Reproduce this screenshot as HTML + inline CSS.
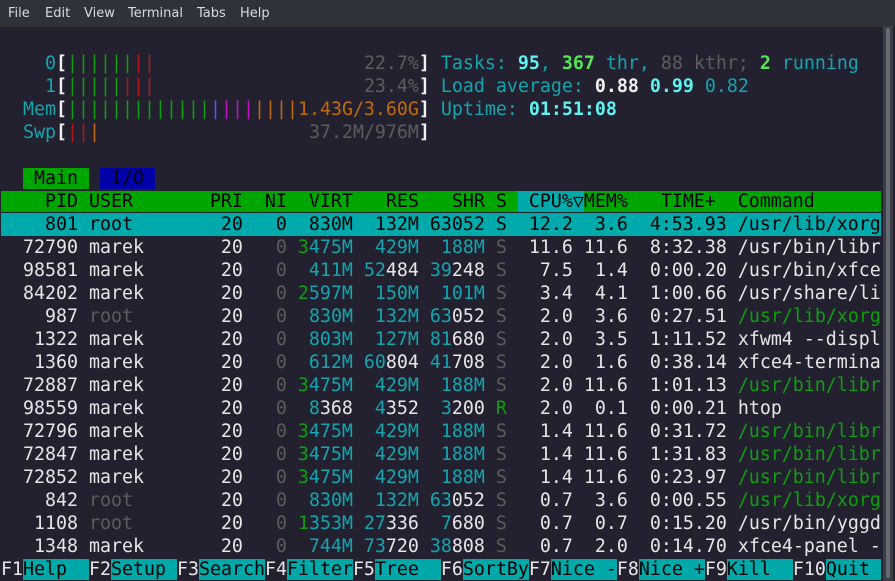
<!DOCTYPE html>
<html><head><meta charset="utf-8"><style>
html,body{margin:0;padding:0;width:895px;height:581px;overflow:hidden;background:#232130}
#menu{position:absolute;left:0;top:0;width:895px;height:27px;background:#2f3239;font-family:"DejaVu Sans","Liberation Sans",sans-serif;font-size:13px;color:#d8dadd}
#menu span{position:absolute;top:6px}
#term{position:absolute;left:1px;top:29px;width:880px;font-family:"DejaVu Sans Mono","Liberation Mono",monospace;font-size:18.27px;color:#e6e6e6}
.l{height:23px;line-height:23px;white-space:pre;width:880px;overflow:hidden}
#sb{position:absolute;left:883px;top:26px;width:10px;height:555px;background:#3a3d45}
#sb div{position:absolute;left:3px;top:2px;width:4px;height:550px;background:#666a72;border-radius:2px}
.t{color:#13a5ae}.c{color:#5ff2f2;font-weight:bold}.g{color:#0f9e0f}.G{color:#55e655;font-weight:bold}
.k{color:#5c5c5c}.w{color:#f0f0f0;font-weight:bold}.r{color:#b01818}.o{color:#c06a10}.b{color:#5555ff}.m{color:#c010c0}
.hd{background:#00a600;color:#000}.sel{background:#00aaaa;color:#000}.ft{background:#00a8a8;color:#000}
.bl{background:#0000a8;color:#000}
</style></head><body>
<div id="menu"><span style="left:8px">File</span><span style="left:45px">Edit</span><span style="left:84px">View</span><span style="left:128px">Terminal</span><span style="left:197px">Tabs</span><span style="left:240px">Help</span></div>
<div id="sb"><div></div></div>
<div id="term">
<div class="l"> </div>
<div class="l">    <span class="t">0</span><span class="w">[</span><span class="g">||||||</span><span class="r">||</span>                   <span class="k">22.7%</span><span class="w">]</span> <span class="t">Tasks: </span><span class="c">95</span><span class="t">, </span><span class="G">367</span><span class="t"> thr, </span><span class="k">88 kthr; </span><span class="G">2</span><span class="t"> running</span></div>
<div class="l">    <span class="t">1</span><span class="w">[</span><span class="g">|||||</span><span class="r">|||</span>                   <span class="k">23.4%</span><span class="w">]</span> <span class="t">Load average: </span><span class="w">0.88 </span><span class="c">0.99 </span><span class="t">0.82</span></div>
<div class="l">  <span class="t">Mem</span><span class="w">[</span><span class="g">|||||||||||||</span><span class="b">|</span><span class="m">|||</span><span class="o">||||1.43G/3.60G</span><span class="w">]</span> <span class="t">Uptime: </span><span class="c">01:51:08</span></div>
<div class="l">  <span class="t">Swp</span><span class="w">[</span><span class="r">||</span><span class="o">|</span>                   <span class="k">37.2M/976M</span><span class="w">]</span></div>
<div class="l"> </div>
<div class="l">  <span class="hd"> Main </span> <span class="bl"> I/O </span></div>
<div class="l"><span class="hd">    PID USER       PRI  NI  VIRT   RES   SHR S </span><span class="sel"> CPU%▽</span><span class="hd">MEM%   TIME+  Command      </span></div>
<div class="l sel">    801 root        20   0  830M  132M 63052 S  12.2  3.6  4:53.93 /usr/lib/xorg</div>
<div class="l">  72790 marek       20   <span class="k">0</span> <span class="g">3</span><span class="t">475M  429M  188M</span> <span class="k">S</span>  11.6 11.6  8:32.38 /usr/bin/libr</div>
<div class="l">  98581 marek       20   <span class="k">0</span>  <span class="t">411M 52</span>484 <span class="t">39</span>248 <span class="k">S</span>   7.5  1.4  0:00.20 /usr/bin/xfce</div>
<div class="l">  84202 marek       20   <span class="k">0</span> <span class="g">2</span><span class="t">597M  150M  101M</span> <span class="k">S</span>   3.4  4.1  1:00.66 /usr/share/li</div>
<div class="l">    987 <span class="k">root</span>        20   <span class="k">0</span>  <span class="t">830M  132M 63</span>052 <span class="k">S</span>   2.0  3.6  0:27.51 <span class="g">/usr/lib/xorg</span></div>
<div class="l">   1322 marek       20   <span class="k">0</span>  <span class="t">803M  127M 81</span>680 <span class="k">S</span>   2.0  3.5  1:11.52 xfwm4 --displ</div>
<div class="l">   1360 marek       20   <span class="k">0</span>  <span class="t">612M 60</span>804 <span class="t">41</span>708 <span class="k">S</span>   2.0  1.6  0:38.14 xfce4-termina</div>
<div class="l">  72887 marek       20   <span class="k">0</span> <span class="g">3</span><span class="t">475M  429M  188M</span> <span class="k">S</span>   2.0 11.6  1:01.13 <span class="g">/usr/bin/libr</span></div>
<div class="l">  98559 marek       20   <span class="k">0</span>  <span class="t">8</span>368  <span class="t">4</span>352  <span class="t">3</span>200 <span class="g">R</span>   2.0  0.1  0:00.21 htop</div>
<div class="l">  72796 marek       20   <span class="k">0</span> <span class="g">3</span><span class="t">475M  429M  188M</span> <span class="k">S</span>   1.4 11.6  0:31.72 <span class="g">/usr/bin/libr</span></div>
<div class="l">  72847 marek       20   <span class="k">0</span> <span class="g">3</span><span class="t">475M  429M  188M</span> <span class="k">S</span>   1.4 11.6  1:31.83 <span class="g">/usr/bin/libr</span></div>
<div class="l">  72852 marek       20   <span class="k">0</span> <span class="g">3</span><span class="t">475M  429M  188M</span> <span class="k">S</span>   1.4 11.6  0:23.97 <span class="g">/usr/bin/libr</span></div>
<div class="l">    842 <span class="k">root</span>        20   <span class="k">0</span>  <span class="t">830M  132M 63</span>052 <span class="k">S</span>   0.7  3.6  0:00.55 <span class="g">/usr/lib/xorg</span></div>
<div class="l">   1108 <span class="k">root</span>        20   <span class="k">0</span> <span class="g">1</span><span class="t">353M 27</span>336  <span class="t">7</span>680 <span class="k">S</span>   0.7  0.7  0:15.20 /usr/bin/yggd</div>
<div class="l">   1348 marek       20   <span class="k">0</span>  <span class="t">744M 73</span>720 <span class="t">38</span>808 <span class="k">S</span>   0.7  2.0  0:14.70 xfce4-panel -</div>
<div class="l">F1<span class="ft">Help  </span>F2<span class="ft">Setup </span>F3<span class="ft">Search</span>F4<span class="ft">Filter</span>F5<span class="ft">Tree  </span>F6<span class="ft">SortBy</span>F7<span class="ft">Nice -</span>F8<span class="ft">Nice +</span>F9<span class="ft">Kill  </span>F10<span class="ft">Quit </span></div>
</div>
</body></html>
